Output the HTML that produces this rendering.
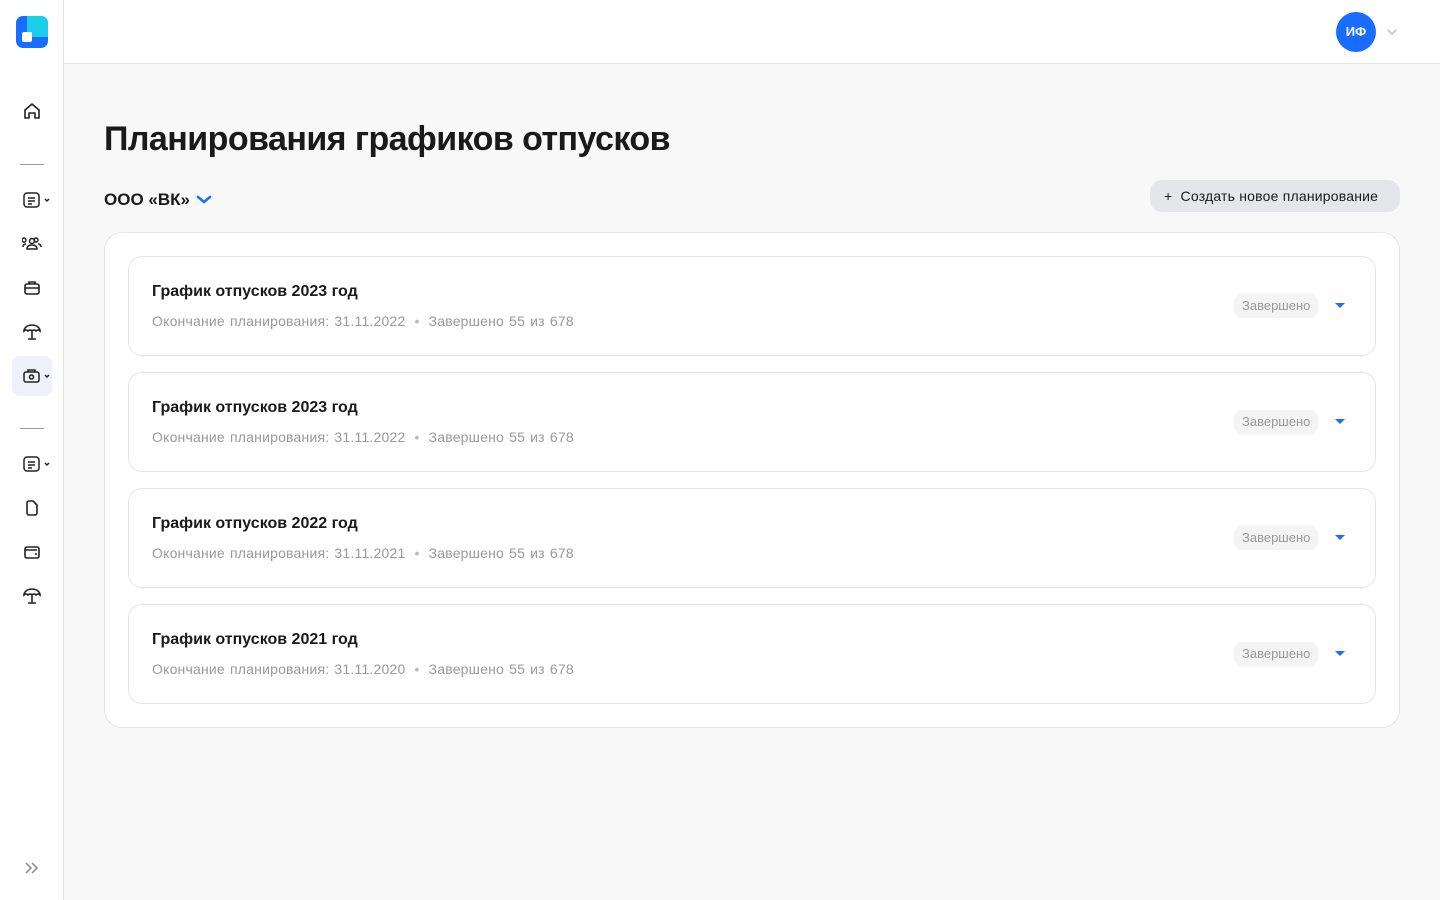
<!DOCTYPE html>
<html><head><meta charset="utf-8"><style>
*{box-sizing:border-box;margin:0;padding:0}
body{width:1440px;height:900px;background:#f8f8f9;font-family:"Liberation Sans",sans-serif;color:#1a1a1a;position:relative;overflow:hidden}
.side{position:absolute;left:0;top:0;width:64px;height:900px;background:#fff;border-right:1px solid #e4e6eb}
.top{position:absolute;left:64px;top:0;right:0;height:64px;background:#fff;border-bottom:1px solid #e4e6eb}
.logo{position:absolute;left:16px;top:16px;width:32px;height:32px;border-radius:7px;background:#1a6cff;overflow:hidden}
.logo:after{content:"";position:absolute;left:11px;top:0;width:21px;height:21px;background:#1ccde8;border-radius:0 0 0 6px}
.logo i{position:absolute;left:6px;top:16px;width:10px;height:10px;background:#fff;border-radius:2px;z-index:1}
.ic{position:absolute;left:22px;width:20px;height:20px}
.sep{position:absolute;left:20px;width:24px;height:1px;background:#999}
.av{position:absolute;left:1336px;top:12px;width:40px;height:40px;border-radius:50%;background:#1a6cff;color:#fff;font-size:13px;font-weight:bold;text-align:center;line-height:40px}
h1{position:absolute;left:104px;top:120px;font-size:34px;font-weight:bold;letter-spacing:-0.55px}
.org{position:absolute;left:104px;top:190px;font-size:17px;font-weight:bold}
.btn{position:absolute;left:1150px;top:180px;width:250px;height:32px;border-radius:12px;background:#e4e6ea;font-size:14px;line-height:32px;padding-left:14px;letter-spacing:0.2px}
.wrap{position:absolute;left:104px;top:232px;width:1296px;height:496px;background:#fff;border:1px solid #e4e6eb;border-radius:18px}
.card{position:absolute;left:23px;width:1248px;height:100px;border:1px solid #e4e6eb;border-radius:14px;background:#fff}
.card b{position:absolute;left:23px;top:26px;font-size:16px}
.card span{position:absolute;left:23px;top:56px;font-size:14px;color:#999;letter-spacing:0.2px;word-spacing:1px}
.card span em{font-style:normal;margin:0 9px;color:#bbb}
.tag{position:absolute;left:1105px;top:37px;height:24px;padding:0 8px;line-height:24px;border-radius:8px;background:#f4f4f5;color:#999;font-size:13px}
.tri{position:absolute;left:1206px;top:46px;border-left:5px solid transparent;border-right:5px solid transparent;border-top:5px solid #1a6cff}
</style></head><body>
<div class="side">
<div class="logo"><i></i></div>
<svg class="ic" style="top:101px" viewBox="0 0 20 20" fill="none" stroke="#222" stroke-width="1.6" stroke-linejoin="round"><path d="M3 9 10 3l7 6v8h-4v-5H7v5H3z"/></svg>
<div class="sep" style="top:164px"></div>
<svg class="ic" style="top:190px;width:30px" viewBox="0 0 30 20" fill="none" stroke="#222" stroke-width="1.5"><rect x="2" y="3" width="15" height="14" rx="3"/><path d="M6 8h7M6 11h7M6 14h4M23 9l2 2 2-2"/></svg>
<svg class="ic" style="top:234px" viewBox="0 0 20 20" fill="none" stroke="#222" stroke-width="1.5"><circle cx="10" cy="7" r="2.5"/><path d="M5 15c0-3 2-4 5-4s5 1 5 4zM4 6a2 2 0 1 0 0 .1M16 6a2 2 0 1 0 0 .1M1 13c0-2 1-3 3-3M19 13c0-2-1-3-3-3"/></svg>
<svg class="ic" style="top:278px" viewBox="0 0 20 20" fill="none" stroke="#222" stroke-width="1.6"><rect x="3" y="6" width="14" height="10" rx="2"/><path d="M7 6V4h6v2M3 10h14"/></svg>
<svg class="ic" style="top:322px" viewBox="0 0 20 20" fill="none" stroke="#222" stroke-width="1.6"><path d="M2 9a8 6 0 0 1 16 0q-2-2-4 0-2-2-4 0-2-2-4 0-2-2-4 0zM10 9v8M6 17h8"/></svg>
<div style="position:absolute;left:12px;top:356px;width:40px;height:40px;border-radius:8px;background:#eef1f7"></div>
<svg class="ic" style="top:366px;width:30px" viewBox="0 0 30 20" fill="none" stroke="#222" stroke-width="1.5"><rect x="2" y="6" width="15" height="10" rx="2"/><path d="M6 6V4h7v2"/><circle cx="9.5" cy="11" r="2"/><path d="M23 9l2 2 2-2"/></svg>
<div class="sep" style="top:428px"></div>
<svg class="ic" style="top:454px;width:30px" viewBox="0 0 30 20" fill="none" stroke="#222" stroke-width="1.5"><rect x="2" y="3" width="15" height="14" rx="3"/><path d="M6 8h7M6 11h7M6 14h4M23 9l2 2 2-2"/></svg>
<svg class="ic" style="top:498px" viewBox="0 0 20 20" fill="none" stroke="#222" stroke-width="1.6" stroke-linejoin="round"><path d="M5 5a2 2 0 0 1 2-2h4l4 4v8a2 2 0 0 1-2 2H7a2 2 0 0 1-2-2z"/></svg>
<svg class="ic" style="top:542px" viewBox="0 0 20 20" fill="none" stroke="#222" stroke-width="1.6"><rect x="3" y="5" width="14" height="11" rx="2"/><path d="M3 8h12M13 12h2"/></svg>
<svg class="ic" style="top:586px" viewBox="0 0 20 20" fill="none" stroke="#222" stroke-width="1.6"><path d="M2 9a8 6 0 0 1 16 0q-2-2-4 0-2-2-4 0-2-2-4 0-2-2-4 0zM10 9v8M6 17h8"/></svg>
<svg class="ic" style="top:858px" viewBox="0 0 20 20" fill="none" stroke="#888" stroke-width="1.5"><path d="M4 5l5 5-5 5M10 5l5 5-5 5"/></svg>
</div>
<div class="top"></div>
<div class="av">ИФ</div>
<svg style="position:absolute;left:1386px;top:28px" width="12" height="8" viewBox="0 0 12 8" fill="none" stroke="#bbb" stroke-width="1.5"><path d="M2 2l4 4 4-4"/></svg>
<h1>Планирования графиков отпусков</h1>
<div class="org">ООО «ВК»</div>
<svg style="position:absolute;left:195px;top:194px" width="18" height="12" viewBox="0 0 18 12" fill="none" stroke="#1a6cff" stroke-width="2.5" stroke-linecap="round"><path d="M3 3l6 5 6-5"/></svg>
<div class="btn">+&nbsp; Создать новое планирование</div>
<div class="wrap">
<div class="card" style="top:23px"><b>График отпусков 2023 год</b><span>Окончание планирования: 31.11.2022<em>•</em>Завершено 55 из 678</span><div class="tag">Завершено</div><div class="tri"></div></div>
<div class="card" style="top:139px"><b>График отпусков 2023 год</b><span>Окончание планирования: 31.11.2022<em>•</em>Завершено 55 из 678</span><div class="tag">Завершено</div><div class="tri"></div></div>
<div class="card" style="top:255px"><b>График отпусков 2022 год</b><span>Окончание планирования: 31.11.2021<em>•</em>Завершено 55 из 678</span><div class="tag">Завершено</div><div class="tri"></div></div>
<div class="card" style="top:371px"><b>График отпусков 2021 год</b><span>Окончание планирования: 31.11.2020<em>•</em>Завершено 55 из 678</span><div class="tag">Завершено</div><div class="tri"></div></div>
</div>
</body></html>
